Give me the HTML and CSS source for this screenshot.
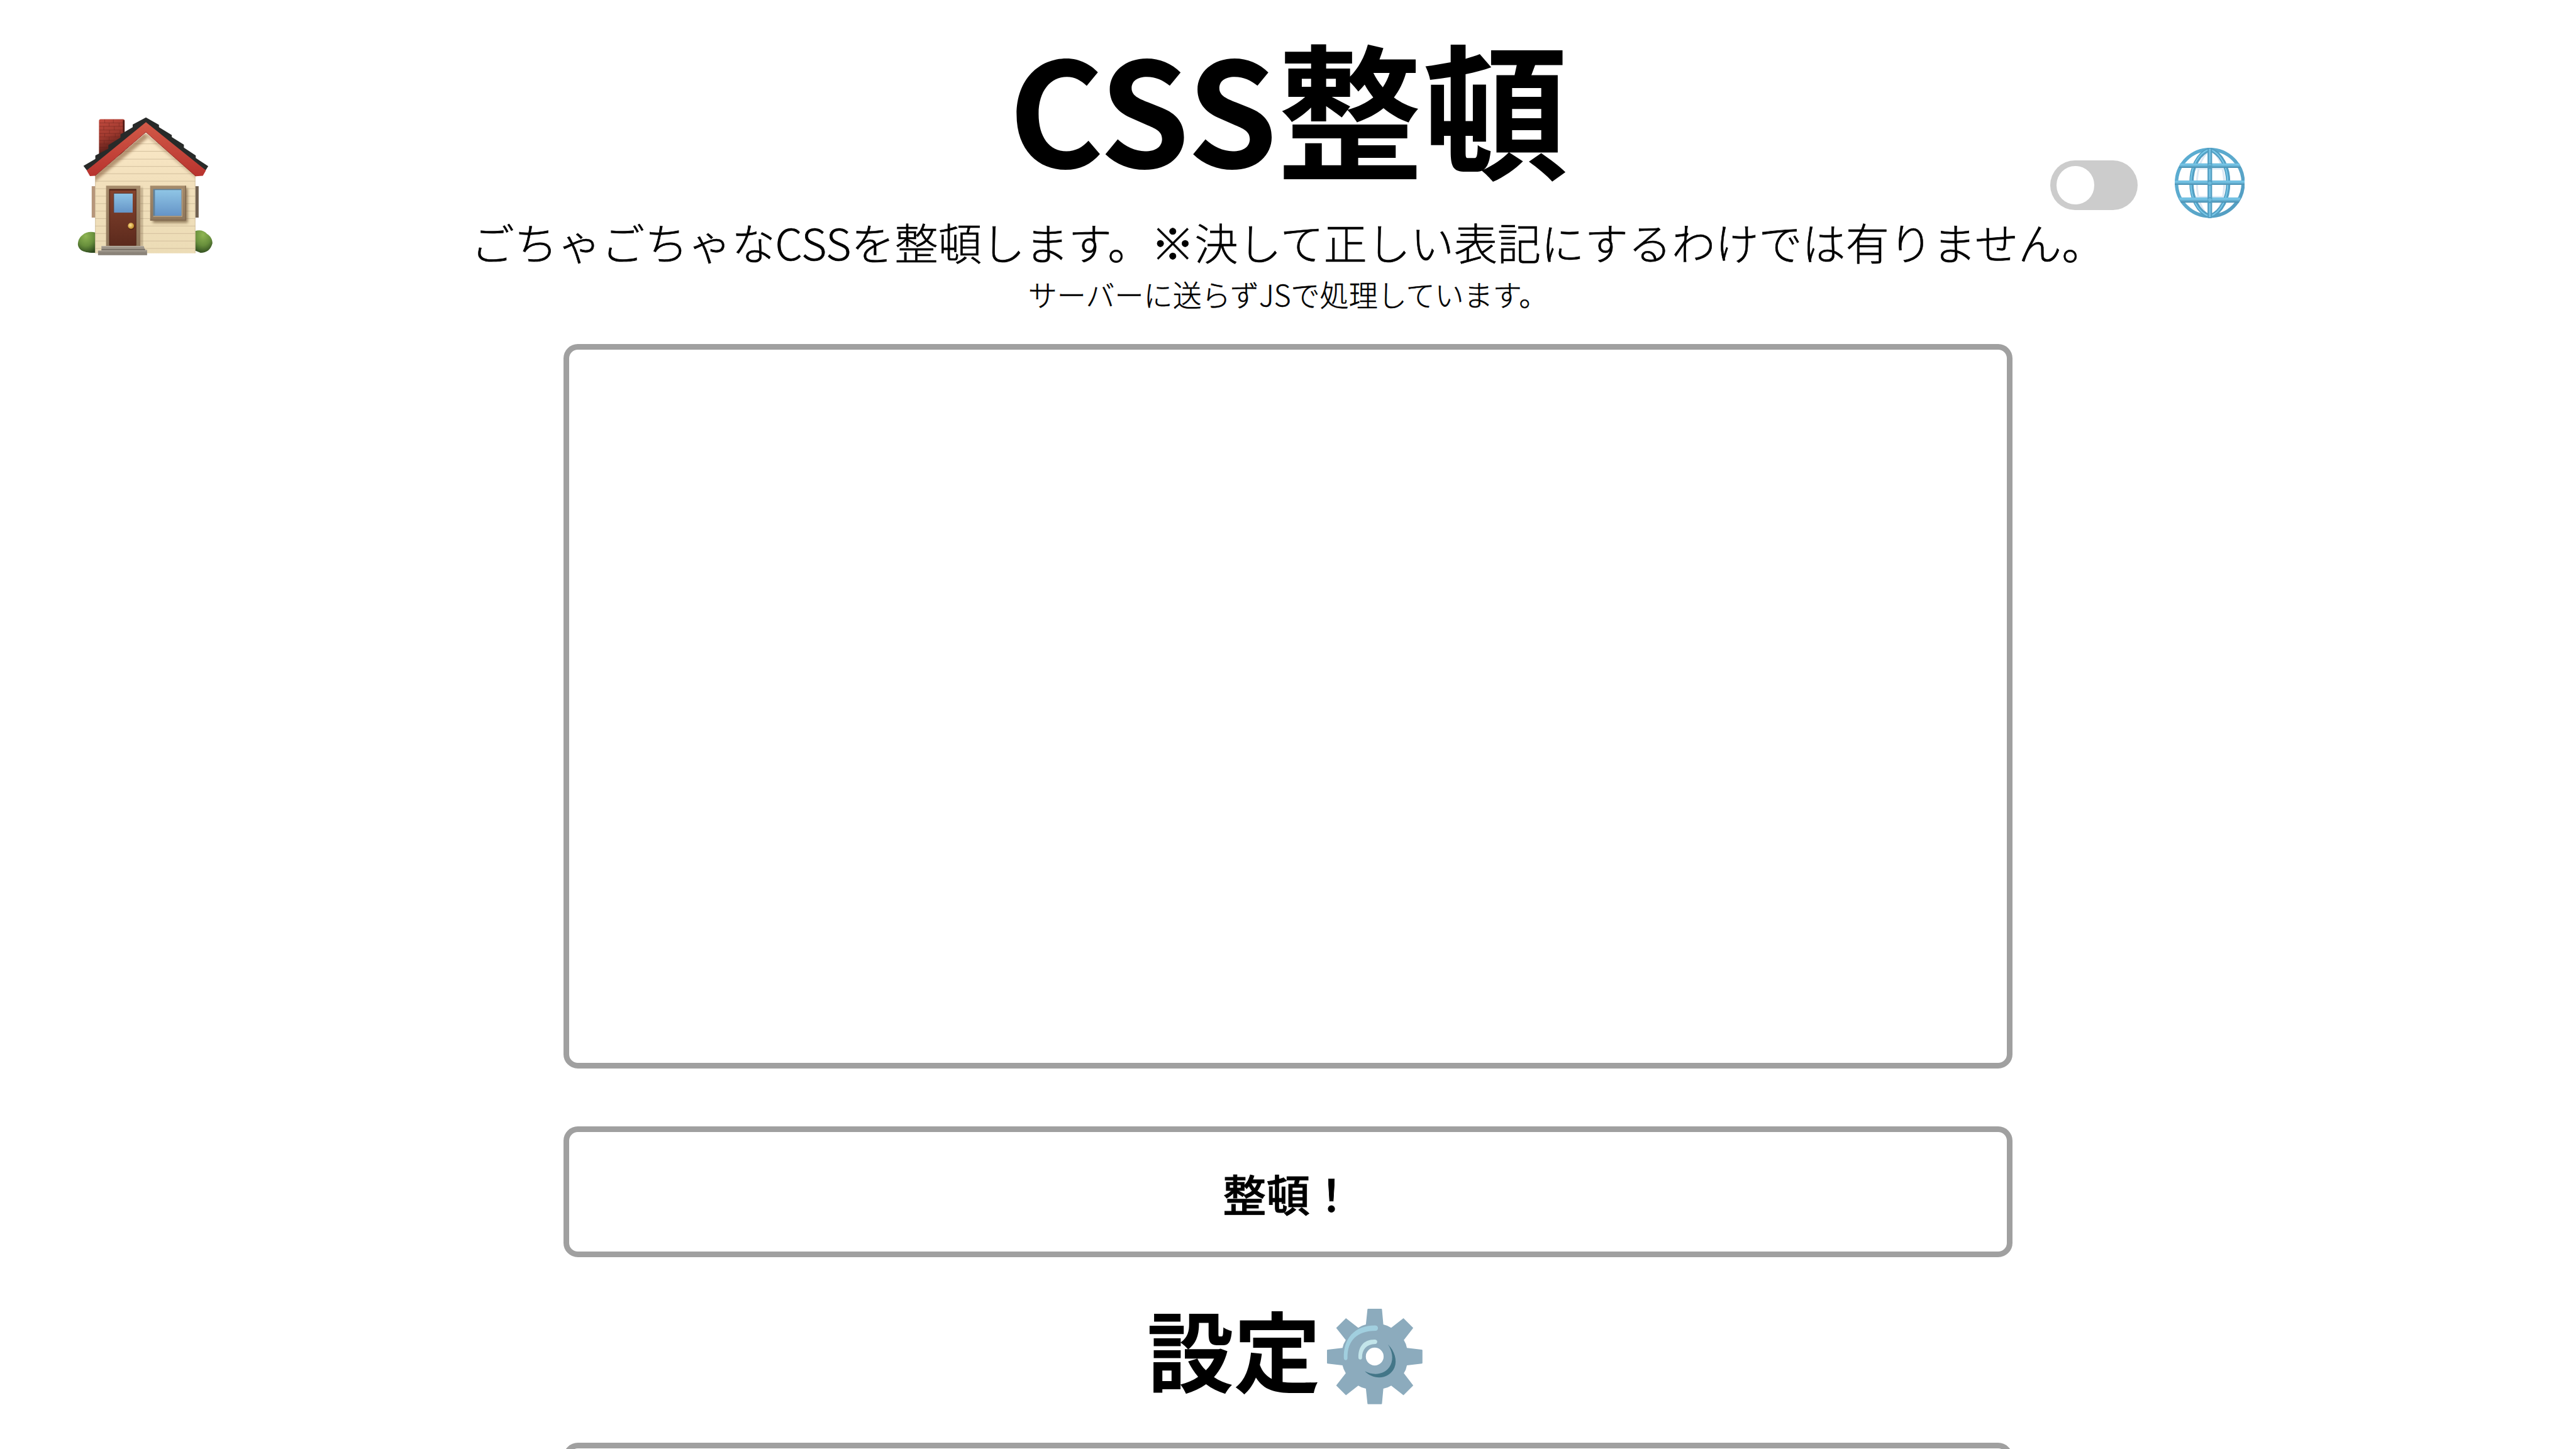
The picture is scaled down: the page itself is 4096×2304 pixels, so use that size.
FILE: index.html
```html
<!DOCTYPE html>
<html lang="ja">
<head>
<meta charset="utf-8">
<title>CSS整頓</title>
<link rel="stylesheet" href="styles.css">
</head>
<body>
<a class="home" aria-label="ホーム">
<svg class="icon" viewBox="0 0 870 870">
  <defs>
    <linearGradient id="wall" x1="0" y1="0" x2="0" y2="1"><stop offset="0" stop-color="#fbe9c8"/><stop offset=".4" stop-color="#f2e0bc"/><stop offset="1" stop-color="#ecdcb6"/></linearGradient>
    <linearGradient id="roof" x1="0" y1="0" x2="0" y2="1"><stop offset="0" stop-color="#d25a48"/><stop offset="1" stop-color="#b8332e"/></linearGradient>
    <linearGradient id="brick" x1="0" y1="0" x2="0.3" y2="1"><stop offset="0" stop-color="#c34b3f"/><stop offset=".5" stop-color="#a03a2f"/><stop offset="1" stop-color="#4a1814"/></linearGradient>
    <linearGradient id="glass" x1="0" y1="0" x2="0" y2="1"><stop offset="0" stop-color="#8fc5e5"/><stop offset="1" stop-color="#6594c7"/></linearGradient>
    <linearGradient id="door" x1="0" y1="0" x2="0" y2="1"><stop offset="0" stop-color="#85432d"/><stop offset="1" stop-color="#5c2a1d"/></linearGradient>
    <linearGradient id="wood" x1="0" y1="0" x2="0" y2="1"><stop offset="0" stop-color="#a58b6b"/><stop offset="1" stop-color="#8f775c"/></linearGradient>
    <linearGradient id="step" x1="0" y1="0" x2="0" y2="1"><stop offset="0" stop-color="#a39a8e"/><stop offset="1" stop-color="#857e74"/></linearGradient>
    <radialGradient id="bush" cx=".45" cy=".2" r=".85"><stop offset="0" stop-color="#8fb553"/><stop offset=".55" stop-color="#688f3c"/><stop offset="1" stop-color="#2c481d"/></radialGradient>
    <radialGradient id="knob" cx=".4" cy=".4" r=".6"><stop offset="0" stop-color="#ffe391"/><stop offset="1" stop-color="#c18a28"/></radialGradient>
    <filter id="soft" x="-20%" y="-20%" width="140%" height="140%"><feGaussianBlur stdDeviation="7"/></filter>
    <clipPath id="front"><path d="M165 375L430 152L688 368V780H165Z"/></clipPath>
  </defs>
  <rect x="185" y="80" width="134" height="190" rx="9" fill="url(#brick)"/>
  <path d="M314 86V150" stroke="#4a1915" stroke-width="8"/>
  <path d="M187 100H316M187 118H316M187 137H316M187 155H316M187 173H310M187 192H285M187 210H260M187 228H240M215 82V100M260 82V100M290 100V118M238 100V118M210 118V137M265 118V137M240 137V155M295 137V155M215 155V173M270 155V173M238 173V192M212 192V210" stroke="#5f201b" stroke-width="2.500" opacity=".5" fill="none"/>
  <path d="M147 430H166V594H147Z" fill="#b6967a"/>
  <path d="M687 430H705V594H687Z" fill="#706050"/>
  <path d="M166 672C145 665 115 668 99 685C82 697 75 716 75 735C80 765 105 778 166 778Z" fill="url(#bush)"/>
  <path d="M687 664C710 656 735 662 749 679C768 690 777 708 777 728C768 762 748 777 715 778L687 766Z" fill="url(#bush)"/>
  <path d="M165 375L430 152L688 368V780H165Z" fill="url(#wall)"/>
  <g clip-path="url(#front)">
    <path d="M165 209H688M165 248H688M165 289H688M165 327H688M165 365H688M165 404H688M165 443H688M165 482H688M165 521H688M165 560H688M165 599H688M165 638H688M165 677H688M165 716H688M165 755H688" stroke="#d0bd9b" stroke-width="3"/>
    <path d="M150 395L430 163" fill="none" stroke="#87613f" stroke-width="34" opacity=".6" filter="url(#soft)"/>
    <path d="M430 158L700 386" fill="none" stroke="#87613f" stroke-width="12" opacity=".45" filter="url(#soft)"/>
    <path d="M166 370V780M687 370V780" stroke="#b9a583" stroke-width="3"/>
    <path d="M402 438H412V748H402Z" fill="#735b3d" opacity=".65" filter="url(#soft)"/>
    <rect x="466" y="440" width="182" height="181" fill="#735b3d" opacity=".75" filter="url(#soft)"/>
  </g>
  <path d="M104 324L166 288V270L234 235V216L297 176V160L361 122V108L430 71L498 110V122L565 163V174L628 213V229L690 270V283L755 326L741 348L430 112L122 348Z" fill="#282a29"/>
  <path d="M430 96L743 348L727 376L690 378L430 148L164 376L138 377L121 348Z" fill="url(#roof)"/>
  <path d="M690 378L430 148L164 376" fill="none" stroke="#8e2520" stroke-width="3"/>
  <path d="M222 427H401V742H222Z" fill="url(#wood)"/>
  <path d="M238 445H380V740H238Z" fill="#4b2116"/>
  <path d="M242 452H377V740H242Z" fill="url(#door)"/>
  <path d="M262 467H361V568H262Z" fill="url(#glass)"/>
  <path d="M262 568V467H361" stroke="#56372f" stroke-width="3" fill="none"/>
  <circle cx="354" cy="641" r="17" fill="#3d190f" opacity=".6"/>
  <circle cx="352" cy="637" r="16" fill="url(#knob)"/>
  <path d="M452 427H637V609H452Z" fill="url(#wood)"/>
  <path d="M452 607H637V427" fill="none" stroke="#80694f" stroke-width="5"/>
  <path d="M468 445H617V586H468Z" fill="#60819a"/>
  <path d="M477 450H614V584H477Z" fill="url(#glass)"/>
  <path d="M618 443V588H468" fill="none" stroke="#c0a787" stroke-width="4"/>
  <path d="M198 742H418L426 762H436V790H180V766H198Z" fill="url(#step)"/>
  <path d="M181 767H435M199 744H418" stroke="#bbb3a7" stroke-width="4"/>
  <path d="M198 762H426" stroke="#655e56" stroke-width="4"/>
</svg>
</a>
<div class="controls">
  <span class="switch"><span class="switch-knob"></span></span>
  <svg class="globe" viewBox="0 0 366 366">
    <defs>
      <linearGradient id="bar" x1="0" y1="0" x2="0" y2="1"><stop offset="0" stop-color="#6ab9dc"/><stop offset=".3" stop-color="#79c7e8"/><stop offset="1" stop-color="#468bad"/></linearGradient>
      <linearGradient id="ring" gradientUnits="userSpaceOnUse" x1="0" y1="0" x2="366" y2="366"><stop offset="0" stop-color="#5aaed4"/><stop offset=".5" stop-color="#5ca9cc"/><stop offset="1" stop-color="#4f99be"/></linearGradient>
    </defs>
    <g fill="none">
      <path d="M183 10C88 60 88 306 183 356C278 306 278 60 183 10Z" transform="translate(4 4)" stroke="#dce8f4" stroke-width="10"/>
      <path d="M110 109H262M110 256H262" stroke="#dcebf7" stroke-width="8"/>
      <circle cx="183" cy="183" r="174" stroke="url(#ring)" stroke-width="18"/>
      <path d="M183 8C55 55 55 311 183 358C311 311 311 55 183 8Z" stroke="#539fc3" stroke-width="22"/>
      <path d="M180 8C52 55 52 311 180 358" stroke="#7accec" stroke-width="6"/>
      <path d="M183 8C308 55 308 311 183 358" stroke="#7bcaeb" stroke-width="6"/>
    </g>
    <path d="M28 81H338L344 105H22Z" fill="url(#bar)"/>
    <path d="M0 171H366V194H0Z" fill="url(#bar)"/>
    <path d="M22 259H344L334 286H32Z" fill="url(#bar)"/>
    <path d="M171 6Q183-5 195 6V360Q183 370 171 360Z" fill="#539fc3"/>
    <path d="M179 5H187V80H179ZM179 110H187V169H179ZM179 198H187V258H179ZM179 289H187V362H179Z" fill="#7cc6e6"/>
    <path d="M171 92L183 82L195 92M171 184L183 174L195 184L183 195ZM171 271L183 261L195 271L183 282Z" fill="#6bbbdc"/>
  </svg>
</div>
<main class="page">
  <header class="intro">
    <h1 class="title">CSS整頓</h1>
    <p class="lead">ごちゃごちゃなCSSを整頓します。※決して正しい表記にするわけでは有りません。</p>
    <p class="note">サーバーに送らずJSで処理しています。</p>
  </header>
  <textarea class="box editor" spellcheck="false"></textarea>
  <button class="box action">整頓！</button>
  <h2 class="settings">設定<svg class="gear" viewBox="0 0 498 498">
    <path fill="#8cabbd" fill-rule="evenodd" d="M215 0H283Q287 0 287 4L294 82Q316 87 335 99L399 49L450 100L401 163Q413 182 417 204L494 213Q498 213 498 217V282Q498 286 494 286L417 295Q413 318 401 336L450 400L399 451L335 401Q316 413 294 417L287 494Q287 498 283 498H215Q211 498 211 494L203 417Q182 413 163 401L99 451L48 400L98 336Q86 317 81 295L4 286Q0 286 0 282V217Q0 213 4 213L81 204Q86 181 98 163L48 100L99 49L163 99Q182 87 203 82L211 4Q211 0 215 0ZM249 203A46.500 46.500 0 1 0 249 296A46.500 46.500 0 1 0 249 203Z"/>
    <path fill="#a1cfdf" d="M88 258C84 155 145 86 252 87Q266 89 266 101Q266 114 252 115C158 116 105 165 107 258Q106 268 98 268Q89 268 88 258Z"/>
    <path fill="#c3e5ea" d="M164 256C162 197 193 159 251 161Q262 163 262 172Q262 182 251 184C208 185 182 212 183 256Q182 265 174 265Q165 265 164 256Z"/>
    <path fill="#437688" d="M318 186C352 219 368 268 352 307C326 369 242 374 197 326C242 351 307 345 332 293C348 259 340 219 318 186Z"/>
  </svg></h2>
  <section class="box panel"></section>
</main>
</body>
</html>
```
FILE: styles.css
```css
html {
  font-size: 9.142857px;
}

body {
  margin: 0;
  background: #fff;
  color: #000;
  font-family: "Noto Sans CJK JP", sans-serif;
}

.page {
  display: flex;
  flex-direction: column;
  align-items: center;
  height: 100vh;
  overflow: hidden;
}

.intro {
  flex: none;
  height: 59.8rem;
  text-align: center;
  white-space: nowrap;
}

.title,
.lead,
.note,
.settings {
  margin: 0;
}

.title {
  font-size: 25.2rem;
  line-height: 36.5rem;
  font-weight: 700;
}

.lead {
  font-size: 7.56rem;
  line-height: 11rem;
  font-weight: 300;
  -webkit-text-stroke: .009em #000;
}

.note {
  font-size: 5.04rem;
  line-height: 7.3rem;
  font-weight: 300;
  -webkit-text-stroke: .01em #000;
}

.box {
  box-sizing: border-box;
  flex: none;
  width: 252rem;
  margin: 0;
  border: 1rem solid #a0a0a0;
  border-radius: 2.5rem;
  background: #fff;
}

.editor {
  height: 126rem;
  resize: none;
  outline: none;
}

.action {
  height: 22.7rem;
  margin-top: 10.1rem;
  padding: .5rem 0 0;
  color: #000;
  font: 500 7.56rem "Noto Sans CJK JP", sans-serif;
  -webkit-text-stroke: .012em #000;
}

.settings {
  display: flex;
  flex: none;
  justify-content: center;
  height: 32.3rem;
  padding-top: 5rem;
  box-sizing: border-box;
  font-size: 15.12rem;
  line-height: 21.8rem;
  font-weight: 700;
}

.gear {
  width: 16.6rem;
  height: 16.6rem;
  margin: 4rem 1.15rem 0 1.1rem;
}

.panel {
  height: 10rem;
}

/* Icons that float over the page */
.home {
  position: absolute;
  top: 18rem;
  left: 11rem;
}

.icon {
  display: block;
  width: 29rem;
  height: 29rem;
}

.controls {
  position: absolute;
  top: 25.7rem;
  left: 356.6rem;
  display: flex;
  gap: 6.4rem;
}

.switch {
  box-sizing: border-box;
  width: 15.2rem;
  height: 8.6rem;
  margin-top: 2.2rem;
  padding: 1rem 1.1rem;
  border-radius: 4.3rem;
  background: #ccc;
}

.switch-knob {
  display: block;
  width: 6.5rem;
  height: 6.6rem;
  border-radius: 50%;
  background: #fff;
}

.globe {
  width: 12.2rem;
  height: 12.2rem;
}
```
